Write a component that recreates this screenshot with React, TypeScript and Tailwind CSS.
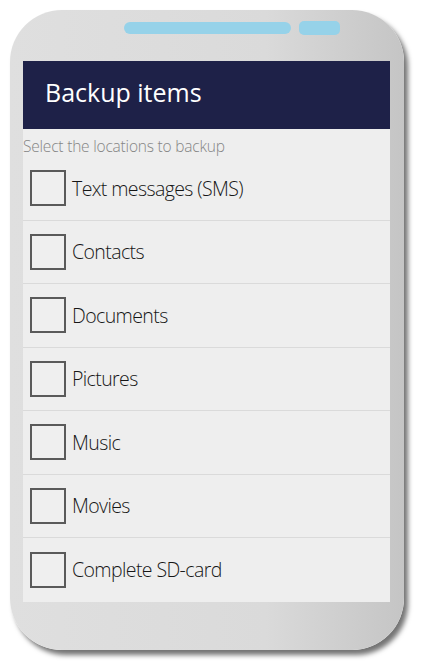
const items = [
  "Text messages (SMS)",
  "Contacts",
  "Documents",
  "Pictures",
  "Music",
  "Movies",
  "Complete SD-card",
]

export default function App() {
  return (
    <div className="h-[671px] w-[424px] bg-white pl-[10px] pt-[10px]">
      {/* Phone body */}
      <div className="flex h-[640px] w-[394px] flex-col rounded-[52px] bg-linear-to-r from-[#dfdfdf] via-[#dadada] via-65% to-[#c5c5c5] pl-[13px] pr-[14px] pt-[11px] shadow-[4px_5px_5px_rgba(0,0,0,0.55)]">
        {/* Speaker pills */}
        <div className="flex items-center gap-[8px] pl-[101px]">
          <div className="h-[12px] w-[167px] rounded-full bg-[#96d2e9]" />
          <div className="h-[14px] w-[41px] rounded-[5px] bg-[#96d2e9]" />
        </div>

        {/* Screen */}
        <div className="mt-[26px] flex flex-col bg-[#eeeeee]">
          <div className="flex h-[68px] items-center bg-[#1e2148] pb-[6px] pl-[22px]">
            <h1 className="font-['Open_Sans',sans-serif] text-[25px] leading-none text-white">
              Backup items
            </h1>
          </div>
          <p className="h-[28px] pt-[8px] font-['Open_Sans',sans-serif] text-[15.5px] font-light leading-[18px] tracking-[-0.2px] text-[#858585]">
            Select the locations to backup
          </p>
          <ul className="flex flex-col">
            {items.map((item, i) => (
              <li
                key={item}
                className={
                  i < items.length - 1
                    ? "flex h-[63.5px] items-center gap-[6px] border-b border-[#dadada] pl-[7px]"
                    : "flex h-[63.5px] items-center gap-[6px] pl-[7px]"
                }
              >
                <span className="h-[36px] w-[36px] border-2 border-[#5a5a5a] bg-[#efefef]" />
                <span className="font-['Open_Sans',sans-serif] text-[19.5px] font-light tracking-[-0.6px] text-[#161616]">
                  {item}
                </span>
              </li>
            ))}
          </ul>
        </div>
      </div>
    </div>
  )
}
